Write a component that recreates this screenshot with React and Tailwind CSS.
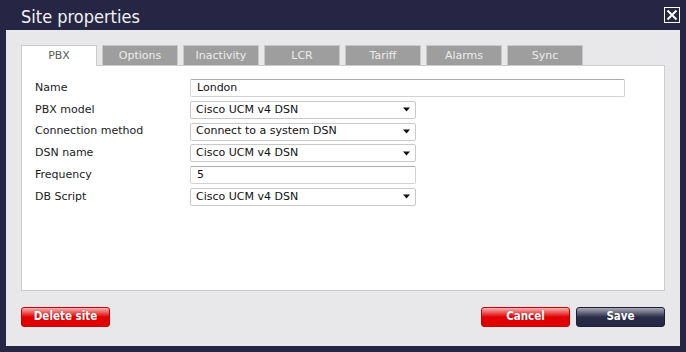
const tabs = ['PBX', 'Options', 'Inactivity', 'LCR', 'Tariff', 'Alarms', 'Sync']

const fields = [
  { label: 'Name', value: 'London', kind: 'text', wide: true },
  { label: 'PBX model', value: 'Cisco UCM v4 DSN', kind: 'select' },
  { label: 'Connection method', value: 'Connect to a system DSN', kind: 'select' },
  { label: 'DSN name', value: 'Cisco UCM v4 DSN', kind: 'select' },
  { label: 'Frequency', value: '5', kind: 'text' },
  { label: 'DB Script', value: 'Cisco UCM v4 DSN', kind: 'select' },
]

function Arrow() {
  return (
    <svg width="7" height="5" viewBox="0 0 7 5" className="shrink-0">
      <path d="M0 0.5h7L3.5 4.5z" fill="#111" />
    </svg>
  )
}

function Field({ field }) {
  const width = field.wide ? 'w-[435px]' : 'w-[226px]'
  if (field.kind === 'select') {
    return (
      <div className={`${width} h-[18px] flex items-center justify-between pl-[5px] pr-[5px] bg-white border border-[#c9c9c9] rounded-[2px] text-[#111]`}>
        <span>{field.value}</span>
        <Arrow />
      </div>
    )
  }
  return (
    <div className={`${width} h-[18px] flex items-center pl-[6px] bg-white border border-[#d2d2d2] border-t-[#ababab] rounded-[2px] text-[#111]`}>
      {field.value}
    </div>
  )
}

function Button({ children, tone }) {
  const look = tone === 'red'
    ? 'border-[#c80000] bg-[linear-gradient(to_bottom,#f7b0b0_0%,#ee5a5a_25%,#e20000_50%,#e00000_100%)]'
    : 'border-[#1d1e36] bg-[linear-gradient(to_bottom,#a9aab6_0%,#6b6c80_25%,#2b2c48_50%,#262744_100%)]'
  return (
    <button
      className={`w-[89px] h-[20px] rounded-[3px] border text-white text-[11.5px] font-bold leading-none [text-shadow:0_0_1px_rgba(0,0,0,0.35)] ${look}`}
      style={{ fontFamily: '"DejaVu Sans Condensed", "Liberation Sans", sans-serif', fontStretch: 'condensed' }}
    >
      {children}
    </button>
  )
}

export default function App() {
  return (
    <div
      className="w-[686px] h-[352px] bg-[#262644] flex flex-col"
      style={{ fontFamily: '"DejaVu Sans", Verdana, sans-serif' }}
    >
      {/* ── Title bar ── */}
      <div className="h-[30px] flex items-start shrink-0">
        <h1
          className="pl-[21px] pt-[6px] text-[18px] leading-[21px] text-[#f2f2f4]"
          style={{ fontFamily: '"DejaVu Sans Condensed", "DejaVu Sans", sans-serif', fontStretch: 'condensed' }}
        >
          Site properties
        </h1>
        <div className="ml-auto mr-[6px] mt-[7px] w-[16px] h-[16px] border border-white flex items-center justify-center">
          <svg width="12" height="12" viewBox="0 0 12 12">
            <path d="M1.5 1.5l9 9M10.5 1.5l-9 9" stroke="white" strokeWidth="2" />
          </svg>
        </div>
      </div>

      {/* ── Body ── */}
      <div className="flex-1 mx-[6px] mb-[6px] bg-[#e8e8ea] px-[15px] pt-[15px] flex flex-col">
        <div className="flex gap-[5px] items-start h-[21px] -mb-px relative z-10 text-[11px]">
          {tabs.map((t, i) =>
            i === 0 ? (
              <div key={t} className="w-[76px] h-[21px] pt-px bg-white border border-b-0 border-[#cccccc] flex items-center justify-center text-[#5a5a5a]">
                {t}
              </div>
            ) : (
              <div key={t} className="w-[76px] h-[20px] pt-px bg-[#9e9e9e] border border-b-0 border-[#c8c8c8] flex items-center justify-center text-[#ececec]">
                {t}
              </div>
            )
          )}
        </div>

        <div className="h-[226px] bg-white border border-[#cccccc] pt-[13px] pl-[13px] flex flex-col gap-[3.75px] text-[11px]">
          {fields.map((f) => (
            <div key={f.label} className="flex items-center h-[18px]">
              <div className="w-[155px] text-[#1a1a1a]">{f.label}</div>
              <Field field={f} />
            </div>
          ))}
        </div>

        <div className="mt-[16px] flex items-center">
          <Button tone="red">Delete site</Button>
          <div className="ml-auto flex gap-[6px]">
            <Button tone="red">Cancel</Button>
            <Button tone="navy">Save</Button>
          </div>
        </div>
      </div>
    </div>
  )
}
